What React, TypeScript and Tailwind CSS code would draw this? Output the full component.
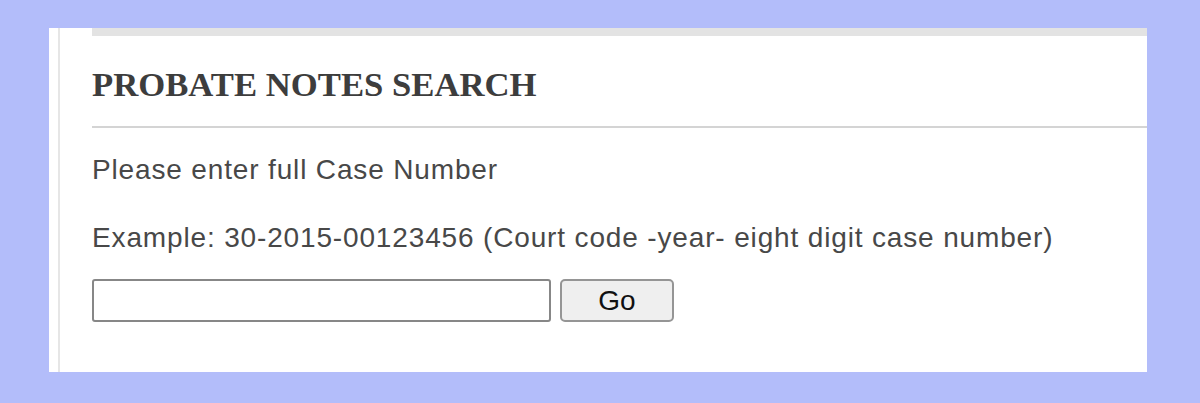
import { useState } from "react";

export default function App() {
  const [caseNo, setCaseNo] = useState("");

  return (
    <div className="w-[1200px] h-[403px] bg-[#b3bdfa] pt-[28px] pl-[49px]">
      <div className="w-[1098px] h-[344px] bg-white flex">
        {/* left gutter with the thin rule */}
        <div className="w-[11px] shrink-0 border-r-2 border-[#e6e6e6]" />

        <div className="flex-1 pl-[32px] flex flex-col">
          <div className="h-[8px] bg-[#e3e3e3]" />

          <h2
            className="mt-[31px] text-[34.7px] leading-[35px] font-bold text-[#3d3d3d]"
            style={{ fontFamily: '"Liberation Serif", "Times New Roman", serif' }}
          >
            PROBATE NOTES SEARCH
          </h2>

          <div className="mt-[24px] h-[2px] bg-[#d4d4d4]" />

          <div
            className="text-[#484848] text-[28px] leading-[28px] tracking-[0.85px]"
            style={{ fontFamily: '"Liberation Sans", Arial, sans-serif' }}
          >
            <p className="mt-[28px]">Please enter full Case Number</p>
            <p className="mt-[40px]">
              Example: 30-2015-00123456 (Court code -year- eight digit case number)
            </p>

            <form
              className="mt-[27px] flex gap-[9px]"
              onSubmit={(e) => e.preventDefault()}
            >
              <input
                type="text"
                value={caseNo}
                onChange={(e) => setCaseNo(e.target.value)}
                className="w-[459px] h-[43px] border-2 border-[#878787] rounded-[3px] bg-white px-2 outline-none"
              />
              <button
                type="submit"
                className="w-[114px] h-[43px] border-2 border-[#959595] rounded-[5px] bg-[#efefef] text-[#111] text-[28px] leading-none tracking-normal"
              >
                Go
              </button>
            </form>
          </div>
        </div>
      </div>
    </div>
  );
}
